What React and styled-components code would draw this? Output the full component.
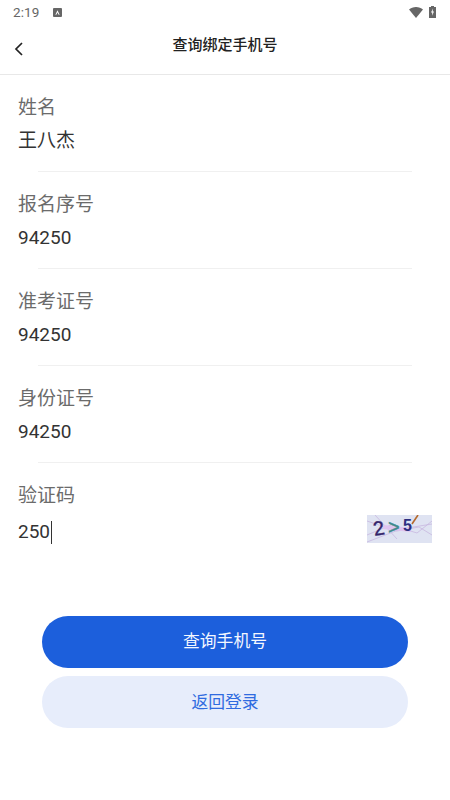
import React from "react";
import styled, { createGlobalStyle } from "styled-components";

const Global = createGlobalStyle`
  html, body { margin: 0; padding: 0; background: #fff; }
  body { font-family: Roboto, "Noto Sans CJK SC", sans-serif; }
`;
const Page = styled.div`
  width: 450px; height: 800px; overflow: hidden; background: #fff;
  display: flex; flex-direction: column;
`;
const StatusBar = styled.div`
  height: 24px; display: flex; align-items: center; justify-content: space-between;
  padding: 0 14px 0 13px; box-sizing: border-box;
`;
const StatusLeft = styled.div`display: flex; align-items: center; gap: 14px;`;
const Time = styled.span`font-size: 13.5px; color: #666; letter-spacing: 0.1px;`;
const StatusRight = styled.div`display: flex; align-items: center; gap: 6px;`;
const NavBar = styled.div`
  height: 51px; position: relative; box-sizing: border-box;
  border-bottom: 1px solid #e8e8e8; display: flex; justify-content: center;
  padding-top: 10px;
`;
const Back = styled.svg`position: absolute; left: 13px; top: 17px;`;
const Title = styled.h1`
  margin: 0; font: 500 15px/22px Roboto, "Noto Sans CJK SC", sans-serif; color: #222;
`;
const Form = styled.div`padding-top: 19px; display: flex; flex-direction: column;`;
const Field = styled.div`
  height: 97px; box-sizing: border-box; padding: 0 18px; position: relative;
  display: flex; flex-direction: column;
  &::after {
    content: ""; display: ${p => (p.$last ? "none" : "block")};
    position: absolute; left: 38px; right: 38px; top: 77px; height: 1px; background: #f0f0f0;
  }
`;
const Label = styled.div`font-size: 19px; line-height: 28px; color: #6b6b6b;`;
const ValueRow = styled.div`
  display: flex; align-items: center; justify-content: space-between;
  margin-top: ${p => (p.$captcha ? "8px" : "5px")};
`;
const Value = styled.div`
  font-size: 19px; line-height: 28px; color: #333; display: flex; align-items: center;
`;
const Caret = styled.span`display: inline-block; width: 1px; height: 23px; background: #333; margin-left: 1px;`;
const Captcha = styled.svg`display: block; margin-top: -3px; margin-bottom: 3px;`;
const Buttons = styled.div`
  margin-top: 37px; padding: 0 42px; display: flex; flex-direction: column; gap: 8px;
`;
const Button = styled.button`
  height: 52px; border: 0; border-radius: 26px; padding: 0 0 ${p => (p.$primary ? "5px" : "2px")};
  font: 400 16.8px "Noto Sans CJK SC", sans-serif;
  background: ${p => (p.$primary ? "#1c5fdc" : "#e7edfb")};
  color: ${p => (p.$primary ? "#f4f7ff" : "#2f6be0")};
`;

const fields = [
  ["姓名", "王八杰"],
  ["报名序号", "94250"],
  ["准考证号", "94250"],
  ["身份证号", "94250"],
];

export default function App() {
  return (
    <Page>
      <Global />
      <StatusBar>
        <StatusLeft>
          <Time>2:19</Time>
          <svg width="9" height="9" viewBox="0 0 10 10">
            <rect width="10" height="10" rx="1" fill="#666" />
            <path d="M2.6 7.6 5 2.4l2.4 5.2H6.3L5 5 3.7 7.6z" fill="#fff" />
          </svg>
        </StatusLeft>
        <StatusRight>
          <svg width="14" height="11" viewBox="0 0 14 11">
            <path d="M0 2.6C1.8 1 4.2 0 7 0s5.2 1 7 2.6L7 11z" fill="#666" />
          </svg>
          <svg width="7" height="12" viewBox="0 0 7 12">
            <path d="M2 0h3v1h2v11H0V1h2z" fill="#666" />
            <path d="M4 2.5 2 6.5h1.3L3 9.8l2-4.2H3.7z" fill="#fff" />
          </svg>
        </StatusRight>
      </StatusBar>
      <NavBar>
        <Back width="12" height="16" viewBox="0 0 12 16">
          <path d="M9 2 3 8l6 6" fill="none" stroke="#222" strokeWidth="1.7" />
        </Back>
        <Title>查询绑定手机号</Title>
      </NavBar>
      <Form>
        {fields.map(([label, value]) => (
          <Field key={label}>
            <Label>{label}</Label>
            <ValueRow>
              <Value>{value}</Value>
            </ValueRow>
          </Field>
        ))}
        <Field $last>
          <Label>验证码</Label>
          <ValueRow $captcha>
            <Value>250<Caret /></Value>
            <Captcha width="65" height="28" viewBox="0 0 65 28">
              <rect width="65" height="28" fill="#dfe3f2" />
              <path d="M0 6 30 16 52 12 65 20M0 20 24 10 50 18 65 6M0 27 34 14 65 9M8 0 30 24" fill="none" stroke="#c8b8e0" strokeWidth="0.8" />
              <path d="M16 12 44 15" stroke="#dfc4f0" strokeWidth="4" />
              <text x="6" y="20" fontSize="20" fontFamily="Liberation Sans" fill="#33246a" stroke="#33246a" strokeWidth="0.4" transform="rotate(-10 12 12)">2</text>
              <text x="21" y="19" fontSize="20" fontFamily="Liberation Sans" fill="#3f8a8c" stroke="#3f8a8c" strokeWidth="0.4">&gt;</text>
              <text x="36" y="16" fontSize="16" fontFamily="Liberation Sans" fontWeight="700" fill="#2c2f80">5</text>
              <path d="M45 9 51 0" stroke="#b56a2c" strokeWidth="1.6" />
            </Captcha>
          </ValueRow>
        </Field>
      </Form>
      <Buttons>
        <Button $primary>查询手机号</Button>
        <Button>返回登录</Button>
      </Buttons>
    </Page>
  );
}
